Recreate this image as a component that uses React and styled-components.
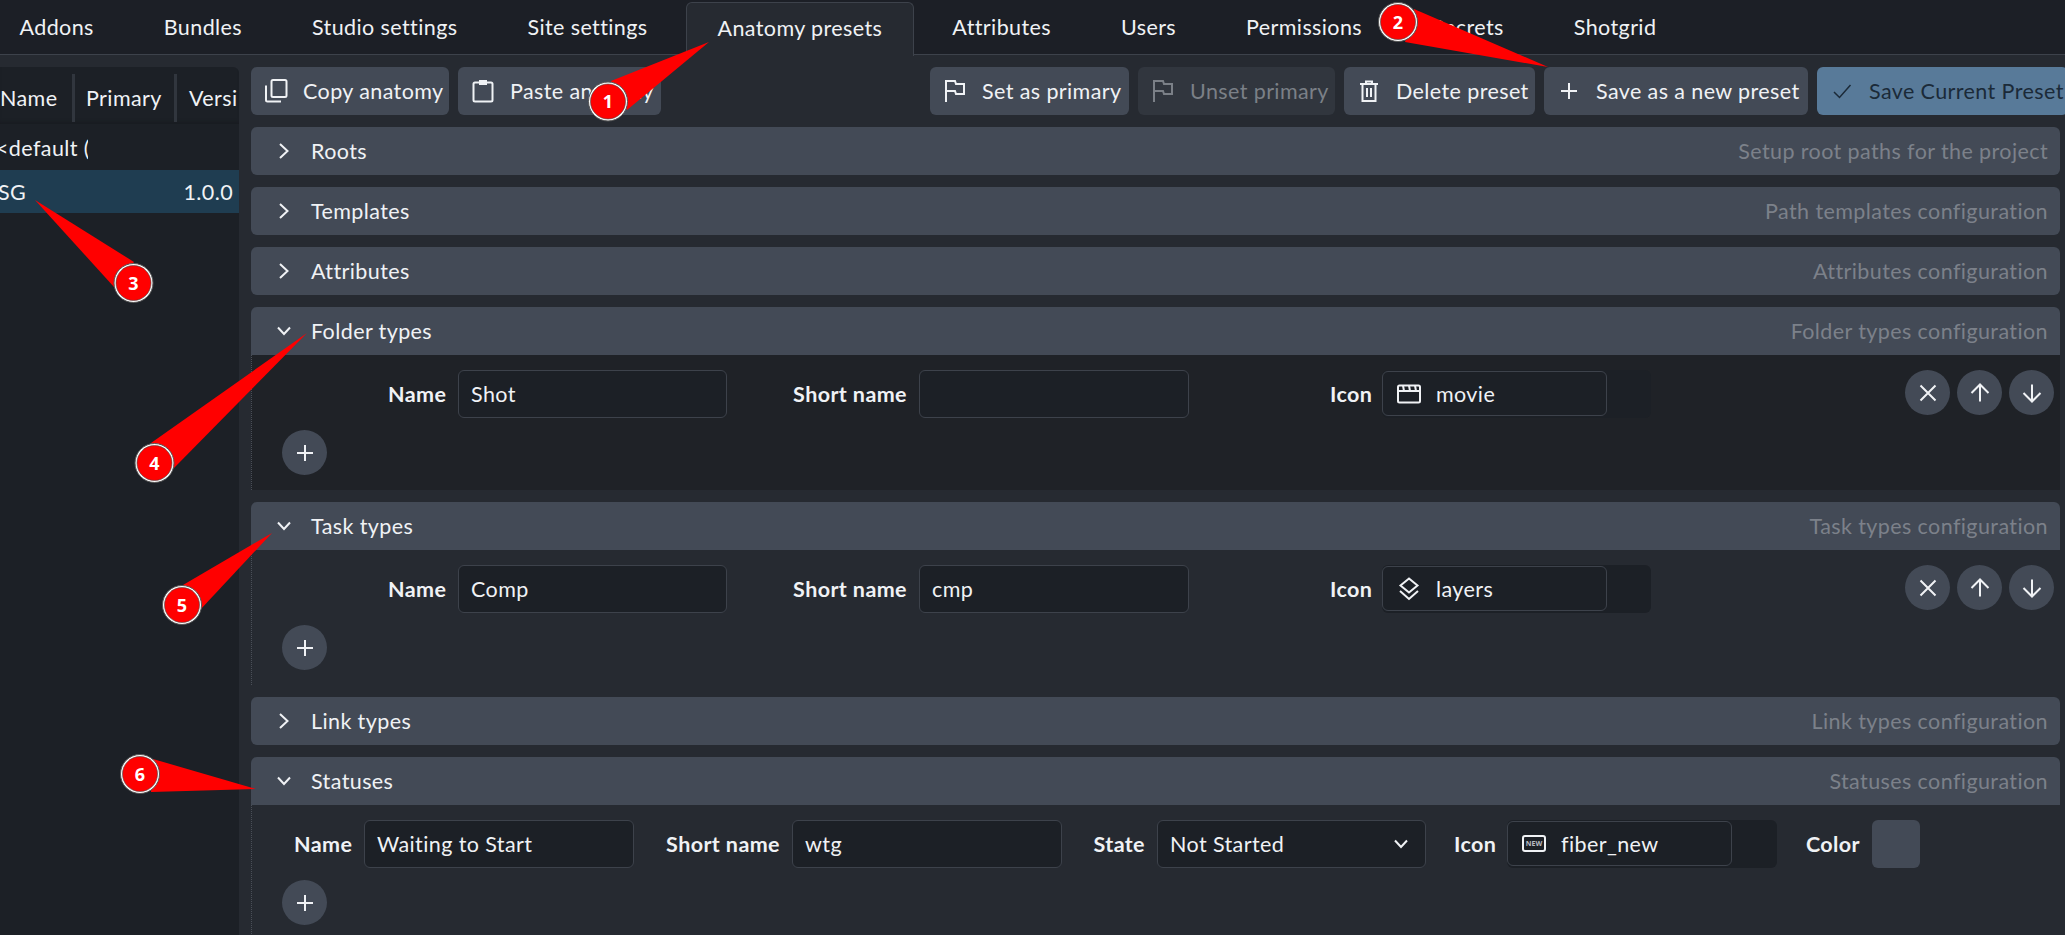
import styled, { createGlobalStyle } from "styled-components";

const GlobalStyle = createGlobalStyle`
  html, body {
    margin: 0;
    height: 100%;
    background: #262a31;
    overflow: hidden;
  }
  * { box-sizing: border-box; }
`;

const Page = styled.div`
  position: relative;
  width: 2065px;
  height: 935px;
  overflow: hidden;
  background: #262a31;
  color: #f0f2f5;
  font-family: "Lato", "Noto Sans", sans-serif;
  font-size: 21.5px;
  letter-spacing: 0.4px;
`;

const TabBar = styled.nav`
  display: flex;
  gap: 7px;
  height: 55px;
  padding: 2px 0 0;
  background: #1c1f26;
  border-bottom: 1px solid #3d424b;
`;

const Tab = styled.div`
  display: flex;
  align-items: center;
  height: ${(p) => (p.$active ? "54px" : "52px")};
  padding: 0 ${(p) => (p.$active ? "30.5px" : "31.5px")};
  padding-bottom: ${(p) => (p.$active ? "4px" : "2px")};
  white-space: nowrap;
  &:first-child { margin-left: -12px; }
  ${(p) =>
    p.$active &&
    `
    background: #262a31;
    border: 1px solid #3d424b;
    border-bottom: none;
    border-radius: 6px 6px 0 0;
    position: relative;
    z-index: 1;
  `}
`;

const Main = styled.div`
  display: flex;
  gap: 12px;
  padding: 12px 5px 0 0;
  height: 880px;
`;

const PresetList = styled.aside`
  width: 239px;
  flex-shrink: 0;
  background: #1c2026;
  border-radius: 0 6px 0 0;
  overflow: hidden;
`;

const ListHead = styled.div`
  display: flex;
  height: 57px;
  align-items: center;
  box-shadow: inset 0 -4px 4px -3px #171a1f;
`;

const HeadCell = styled.div`
  width: ${(p) => p.$width}px;
  flex-shrink: 0;
  height: 48px;
  margin-top: 4px;
  display: flex;
  align-items: center;
  padding-left: ${(p) => p.$pad}px;
  border-right: ${(p) => (p.$line ? "3px solid #31363e" : "none")};
  white-space: nowrap;
  overflow: hidden;
`;

const ListRow = styled.div`
  display: flex;
  justify-content: space-between;
  align-items: center;
  height: ${(p) => p.$height}px;
  padding-right: 6px;
  padding-top: ${(p) => (p.$selected ? 0 : 2)}px;
  background: ${(p) => (p.$selected ? "#1f3d51" : "transparent")};
`;

const RowName = styled.span`
  display: block;
  width: 88px;
  overflow: hidden;
  white-space: nowrap;
  text-indent: ${(p) => p.$shift}px;
`;

const Content = styled.div`
  flex: 1;
  min-width: 0;
  display: flex;
  flex-direction: column;
  gap: 12px;
`;

const Toolbar = styled.div`
  display: flex;
  flex-shrink: 0;
  gap: 9px;
  height: 48px;
  margin-right: -8px;
`;

const Spacer = styled.div`
  flex: 1;
`;

const ToolButton = styled.button`
  display: flex;
  align-items: center;
  gap: 15px;
  width: ${(p) => p.$width}px;
  height: 48px;
  padding: 0 0 0 13px;
  border: none;
  border-radius: 6px;
  font: inherit;
  letter-spacing: inherit;
  white-space: nowrap;
  flex-shrink: 0;
  overflow: hidden;
  color: ${(p) => (p.$primary ? "#1b2a38" : p.$disabled ? "#7b8087" : "#f0f2f5")};
  background: ${(p) => (p.$primary ? "#587a99" : p.$disabled ? "#31363e" : "#434a56")};
`;

const Glyph = styled.svg`
  width: 24px;
  height: 24px;
  flex-shrink: 0;
  fill: none;
  stroke: currentColor;
  stroke-width: ${(p) => p.$weight || 2};
`;

const SectionHeader = styled.div`
  display: flex;
  flex-shrink: 0;
  align-items: center;
  gap: 15px;
  height: 48px;
  padding: 0 12px 0 21px;
  background: #434a56;
  border-radius: ${(p) => (p.$open ? "6px 6px 0 0" : "6px")};
`;

const SectionDesc = styled.span`
  margin-left: auto;
  color: #7c818a;
`;

const SectionBody = styled.div`
  flex-shrink: 0;
  padding: 15px 6px 15px 0;
  background: ${(p) => (p.$dark ? "#1f2227" : "transparent")};
  border-left: 1px dotted #4a4f58;
  margin-top: -12px;
`;

const TypeRow = styled.div`
  display: flex;
  align-items: flex-start;
  padding-left: 13px;
`;

const TypeFields = styled.div`
  display: grid;
  grid-template-columns: repeat(3, 462px);
`;

const StatusRow = styled.div`
  display: flex;
  gap: 28px;
  padding-left: 42px;
`;

const Field = styled.div`
  display: flex;
  align-items: center;
  justify-content: flex-end;
  gap: 12px;
  height: 48px;
`;

const FieldLabel = styled.label`
  width: ${(p) => p.$width}px;
  flex-shrink: 0;
  font-weight: 700;
  text-align: right;
  white-space: nowrap;
`;

const TextBox = styled.div`
  display: flex;
  align-items: center;
  justify-content: space-between;
  width: ${(p) => p.$width}px;
  height: 48px;
  padding: 0 12px;
  background: #1c2026;
  border: 1px solid #3d424b;
  border-radius: 6px;
`;

const IconWrap = styled.div`
  display: flex;
  width: ${(p) => p.$width}px;
  height: 48px;
  padding: 1px 0 5px;
  background: #1c2026;
  border-radius: 6px;
`;

const IconBox = styled.div`
  display: flex;
  align-items: center;
  gap: 15px;
  width: 225px;
  height: 45px;
  padding: 0 14px;
  border: 1px solid #3d424b;
  border-radius: 6px;
`;

const Swatch = styled.div`
  width: 48px;
  height: 48px;
  background: #434a56;
  border-radius: 6px;
`;

const RowActions = styled.div`
  display: flex;
  gap: 7px;
  margin-left: auto;
`;

const RoundButton = styled.button`
  display: flex;
  align-items: center;
  justify-content: center;
  width: 45px;
  height: 45px;
  padding: 0;
  border: none;
  border-radius: 50%;
  background: #434a56;
  color: #f0f2f5;
`;

const AddButton = styled(RoundButton)`
  margin: 12px 0 0 30px;
`;

const Overlay = styled.svg`
  position: absolute;
  left: 0;
  top: 0;
  width: 2065px;
  height: 935px;
  z-index: 5;
  pointer-events: none;
`;

const Icon = ({ d, weight, children }) => (
  <Glyph viewBox="0 0 24 24" $weight={weight}>
    {d && <path d={d} />}
    {children}
  </Glyph>
);

const CopyIcon = () => (
  <Icon d="M2 6.5V21a1.5 1.5 0 0 0 1.5 1.5H17">
    <rect x="7.5" y="1" width="15" height="17" rx="1.5" />
  </Icon>
);
const PasteIcon = () => (
  <Icon>
    <rect x="2.5" y="3.5" width="19" height="19" rx="1.5" />
    <rect x="8" y="1" width="8" height="5" fill="currentColor" stroke="none" />
  </Icon>
);
const FlagIcon = () => <Icon d="M3 23V2H12L13 5H21V15H13L12 12H3" />;
const TrashIcon = () => <Icon d="M3 5H21M9 5V2.5H15V5M5.5 5V22H18.5V5M10 9V18M14 9V18" />;
const PlusIcon = () => <Icon d="M12 4V20M4 12H20" />;
const CheckIcon = () => <Icon d="M4 13L9.5 18.5L20.5 6" weight={1.5} />;
const ChevronRight = () => <Icon d="M8 5L15.5 12L8 19" />;
const ChevronDown = () => <Icon d="M6 8.5L12 15L18 8.5" />;
const CloseIcon = () => <Icon d="M4.5 4.5L19.5 19.5M19.5 4.5L4.5 19.5" />;
const UpIcon = () => <Icon d="M12 3.5V20.5M3.5 12L12 3.5L20.5 12" />;
const DownIcon = () => <Icon d="M12 20.5V3.5M3.5 12L12 20.5L20.5 12" />;
const MovieIcon = () => (
  <Icon d="M1 9H23M6 3.5L7 9M12 3.5L13 9M18 3.5L19 9">
    <rect x="1" y="3.5" width="22" height="17" rx="1.5" />
  </Icon>
);
const LayersIcon = () => <Icon d="M12 1.5L20.5 8.5L12 15.5L3.5 8.5ZM3 14L12 22L21 14" />;
const FiberNewIcon = () => (
  <Glyph viewBox="0 0 24 24">
    <rect x="1" y="4" width="22" height="15" rx="2" />
    <text
      x="12"
      y="14.3"
      textAnchor="middle"
      fontSize="7"
      fontWeight="700"
      fontFamily="'Noto Sans', sans-serif"
      fill="#b9bcc2"
      stroke="none"
      letterSpacing="0"
    >
      NEW
    </text>
  </Glyph>
);

const tabs = [
  "Addons",
  "Bundles",
  "Studio settings",
  "Site settings",
  "Anatomy presets",
  "Attributes",
  "Users",
  "Permissions",
  "Secrets",
  "Shotgrid",
];

const callouts = [
  { n: 1, cx: 608, cy: 101.5, points: "709,42 611,81 627,110" },
  { n: 2, cx: 1398, cy: 22, points: "1548,67 1414,9 1405,42" },
  { n: 3, cx: 133.5, cy: 283, points: "35,200 134,262 114,287" },
  { n: 4, cx: 154.5, cy: 463, points: "307,333 151,443 174,468" },
  { n: 5, cx: 182, cy: 605, points: "272,533 183,585 200,610" },
  { n: 6, cx: 140, cy: 774, points: "256,789 153,759 151,792" },
];

const Section = ({ title, desc, open }) => (
  <SectionHeader $open={open}>
    {open ? <ChevronDown /> : <ChevronRight />}
    <span>{title}</span>
    <SectionDesc>{desc}</SectionDesc>
  </SectionHeader>
);

const TypeEntry = ({ name, short, icon, iconName, dark }) => (
  <SectionBody $dark={dark}>
    <TypeRow>
      <TypeFields>
        <Field>
          <FieldLabel $width={58}>Name</FieldLabel>
          <TextBox $width={269}>{name}</TextBox>
        </Field>
        <Field>
          <FieldLabel $width={118}>Short name</FieldLabel>
          <TextBox $width={270}>{short}</TextBox>
        </Field>
        <Field>
          <FieldLabel $width={40}>Icon</FieldLabel>
          <IconWrap $width={269}>
            <IconBox>
              {icon}
              {iconName}
            </IconBox>
          </IconWrap>
        </Field>
      </TypeFields>
      <RowActions>
        <RoundButton>
          <CloseIcon />
        </RoundButton>
        <RoundButton>
          <UpIcon />
        </RoundButton>
        <RoundButton>
          <DownIcon />
        </RoundButton>
      </RowActions>
    </TypeRow>
    <AddButton>
      <PlusIcon />
    </AddButton>
  </SectionBody>
);

export default function App() {
  return (
    <Page>
      <GlobalStyle />
      <TabBar>
        {tabs.map((t) => (
          <Tab key={t} $active={t === "Anatomy presets"}>
            {t}
          </Tab>
        ))}
      </TabBar>
      <Main>
        <PresetList>
          <ListHead>
            <HeadCell $width={75} $pad={0} $line>Name</HeadCell>
            <HeadCell $width={102} $pad={11} $line>Primary</HeadCell>
            <HeadCell $width={62} $pad={12}>Versi</HeadCell>
          </ListHead>
          <ListRow $height={46}>
            <RowName $shift={-4}>{"<default ("}</RowName>
          </ListRow>
          <ListRow $height={43} $selected>
            <RowName $shift={-2}>SG</RowName>
            <span>1.0.0</span>
          </ListRow>
        </PresetList>
        <Content>
          <Toolbar>
            <ToolButton $width={198}>
              <CopyIcon />
              Copy anatomy
            </ToolButton>
            <ToolButton $width={203}>
              <PasteIcon />
              Paste anatomy
            </ToolButton>
            <Spacer />
            <ToolButton $width={199}>
              <FlagIcon />
              Set as primary
            </ToolButton>
            <ToolButton $width={197} $disabled>
              <FlagIcon />
              Unset primary
            </ToolButton>
            <ToolButton $width={191}>
              <TrashIcon />
              Delete preset
            </ToolButton>
            <ToolButton $width={264}>
              <PlusIcon />
              Save as a new preset
            </ToolButton>
            <ToolButton $width={251} $primary>
              <CheckIcon />
              Save Current Preset
            </ToolButton>
          </Toolbar>
          <Section title="Roots" desc="Setup root paths for the project" />
          <Section title="Templates" desc="Path templates configuration" />
          <Section title="Attributes" desc="Attributes configuration" />
          <Section title="Folder types" desc="Folder types configuration" open />
          <TypeEntry name="Shot" short="" icon={<MovieIcon />} iconName="movie" dark />
          <Section title="Task types" desc="Task types configuration" open />
          <TypeEntry name="Comp" short="cmp" icon={<LayersIcon />} iconName="layers" />
          <Section title="Link types" desc="Link types configuration" />
          <Section title="Statuses" desc="Statuses configuration" open />
          <SectionBody>
            <StatusRow>
              <Field>
                <FieldLabel $width={58}>Name</FieldLabel>
                <TextBox $width={270}>Waiting to Start</TextBox>
              </Field>
              <Field>
                <FieldLabel $width={118}>Short name</FieldLabel>
                <TextBox $width={270}>wtg</TextBox>
              </Field>
              <Field>
                <FieldLabel $width={55}>State</FieldLabel>
                <TextBox $width={269}>
                  Not Started
                  <ChevronDown />
                </TextBox>
              </Field>
              <Field>
                <FieldLabel $width={41}>Icon</FieldLabel>
                <IconWrap $width={270}>
                  <IconBox>
                    <FiberNewIcon />
                    fiber_new
                  </IconBox>
                </IconWrap>
              </Field>
              <Field>
                <FieldLabel $width={55}>Color</FieldLabel>
                <Swatch />
              </Field>
            </StatusRow>
            <AddButton>
              <PlusIcon />
            </AddButton>
          </SectionBody>
        </Content>
      </Main>
      <Overlay viewBox="0 0 2065 935">
        {callouts.map((c) => (
          <g key={c.n}>
            <polygon points={c.points} fill="#ff0000" />
            <circle cx={c.cx} cy={c.cy} r={19.5} fill="#fff" stroke="#555" strokeWidth={1} />
            <circle cx={c.cx} cy={c.cy} r={17.5} fill="#ff0000" stroke="#444" strokeWidth={0.6} />
            <text
              x={c.cx}
              y={c.cy + 6.5}
              textAnchor="middle"
              fill="#fff"
              fontFamily="'Noto Sans', sans-serif"
              fontWeight="700"
              fontSize="18"
            >
              {c.n}
            </text>
          </g>
        ))}
      </Overlay>
    </Page>
  );
}
